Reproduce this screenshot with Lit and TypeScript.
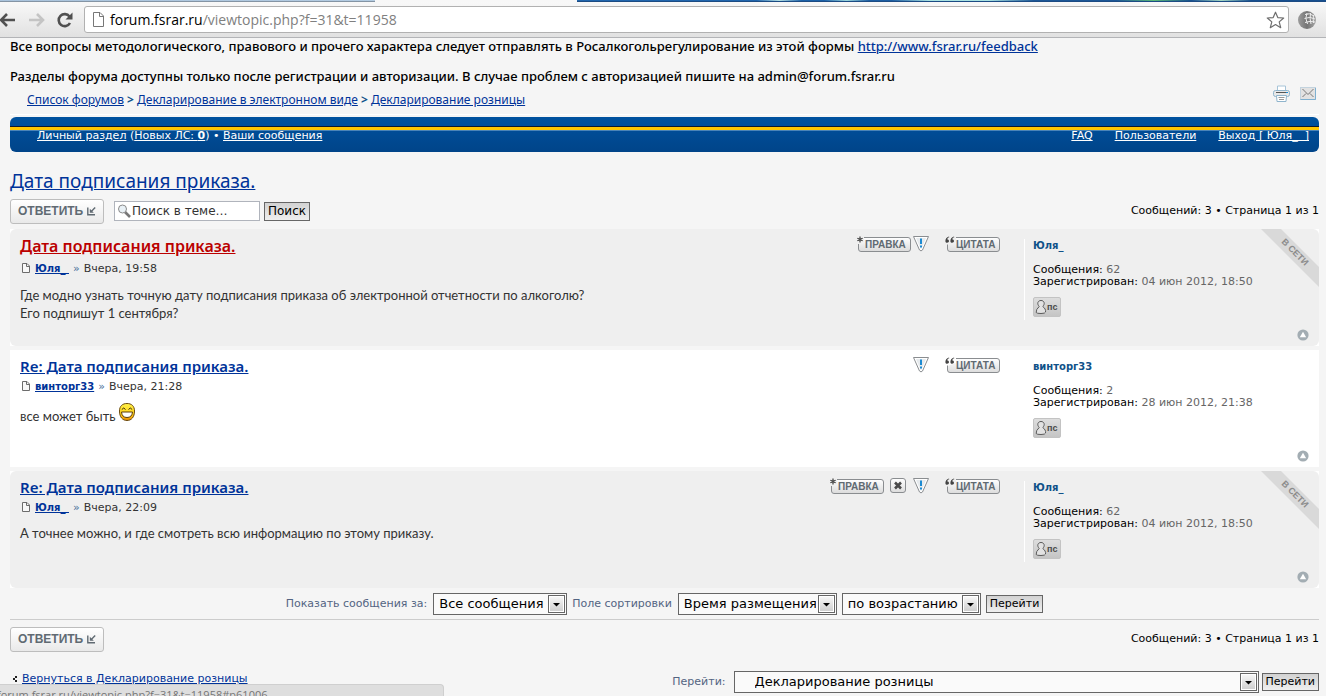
import { LitElement, html, css, svg, nothing } from "lit";
import { customElement, property } from "lit/decorators.js";

type Post = {
  title: string;
  first: boolean;
  author: string;
  time: string;
  lines: string[];
  smile: boolean;
  edit: boolean;
  remove: boolean;
  online: boolean;
  count: string;
  joined: string;
};

const posts: Post[] = [
  {
    title: "Дата подписания приказа.",
    first: true,
    author: "Юля_",
    time: "Вчера, 19:58",
    lines: [
      "Где модно узнать точную дату подписания приказа об электронной отчетности по алкоголю?",
      "Его подпишут 1 сентября?",
    ],
    smile: false,
    edit: true,
    remove: false,
    online: true,
    count: "62",
    joined: "04 июн 2012, 18:50",
  },
  {
    title: "Re: Дата подписания приказа.",
    first: false,
    author: "винторг33",
    time: "Вчера, 21:28",
    lines: ["все может быть"],
    smile: true,
    edit: false,
    remove: false,
    online: false,
    count: "2",
    joined: "28 июн 2012, 21:38",
  },
  {
    title: "Re: Дата подписания приказа.",
    first: false,
    author: "Юля_",
    time: "Вчера, 22:09",
    lines: ["А точнее можно, и где смотреть всю информацию по этому приказу."],
    smile: false,
    edit: true,
    remove: true,
    online: true,
    count: "62",
    joined: "04 июн 2012, 18:50",
  },
];

const shared = css`
  * {
    box-sizing: border-box;
  }
  a {
    color: #003399;
    text-decoration: underline;
  }
  button {
    font: inherit;
    color: inherit;
    margin: 0;
    padding: 0;
    border: 0;
    background: none;
    cursor: pointer;
  }
  svg {
    display: block;
    flex: none;
  }
  h2,
  h3,
  p,
  dl,
  dd {
    margin: 0;
  }
`;

const chipFill = svg`
  <defs>
    <linearGradient id="chip" x1="0" y1="0" x2="0" y2="1">
      <stop offset="0" stop-color="#ffffff" />
      <stop offset="1" stop-color="#dcdcdc" />
    </linearGradient>
  </defs>`;

const editIcon = html`<svg width="56" height="17" viewBox="0 0 56 17">
  ${chipFill}
  <path d="M7 1.500H51Q53.500 1.500 53.500 4V12.500Q53.500 15 51 15H4Q1.500 15 1.500 12.500V8L7 6Z" fill="url(#chip)" />
  <path d="M7 1.500H51Q53.500 1.500 53.500 4V13Q53.500 15.500 51 15.500H4Q1.500 15.500 1.500 13V8" fill="none" stroke="#8a8d90" />
  <path d="M3 0.500V6.500M0.400 2.200L5.600 4.800M5.600 2.200L0.400 4.800" stroke="#3c3c3c" stroke-width="1.200" />
  <text x="8" y="12" font-family="Liberation Sans, sans-serif" font-weight="bold" font-size="10" fill="#606a72">ПРАВКА</text>
</svg>`;

const quoteIcon = html`<svg width="56" height="17" viewBox="0 0 56 17">
  ${chipFill}
  <path d="M11 1.500H52Q54.500 1.500 54.500 4V13Q54.500 15.500 52 15.500H5Q2.500 15.500 2.500 13V9L11 6Z" fill="url(#chip)" />
  <path d="M11 1.500H52Q54.500 1.500 54.500 4V13Q54.500 15.500 52 15.500H5Q2.500 15.500 2.500 13V8.500" fill="none" stroke="#8a8d90" />
  <path d="M4 0.500C1.500 1.200 0.300 3 0.400 5.200C0.600 7.400 4 7.200 4 5.100C4 3.900 3.200 3.300 2.300 3.400C2.400 2.400 3 1.600 4.300 1.200Z" fill="#444" />
  <path d="M9 0.500C6.500 1.200 5.300 3 5.400 5.200C5.600 7.400 9 7.200 9 5.100C9 3.900 8.200 3.300 7.300 3.400C7.400 2.400 8 1.600 9.300 1.200Z" fill="#444" />
  <text x="11" y="12" font-family="Liberation Sans, sans-serif" font-weight="bold" font-size="10" fill="#606a72">ЦИТАТА</text>
</svg>`;

const removeIcon = html`<svg width="16" height="16" viewBox="0 0 16 16">
  ${chipFill}
  <rect x="0.500" y="0.500" width="15" height="14" rx="2.500" fill="url(#chip)" stroke="#8a8d90" />
  <path d="M5 4.500L11 10.500M11 4.500L5 10.500" stroke="#4a4a4a" stroke-width="2.600" />
</svg>`;

const reportIcon = html`<svg width="16" height="16" viewBox="0 0 16 16">
  <path d="M0.500 0.500H15.500L9.500 14Q8 15.800 6.500 14Z" fill="#fff" stroke="#8a8d90" />
  <path d="M3 2H13L8.700 12.300Q8 13.300 7.300 12.300Z" fill="#e6eaed" />
  <path d="M7 2.500H9V8H7ZM7 9.500H9V11.500H7Z" fill="#1c8ad1" />
</svg>`;

const pmIcon = html`<svg width="28" height="20" viewBox="0 0 28 20">
  <defs>
    <linearGradient id="pm" x1="0" y1="0" x2="0" y2="1">
      <stop offset="0" stop-color="#dedede" />
      <stop offset="1" stop-color="#c4c4c4" />
    </linearGradient>
  </defs>
  <rect x="0.500" y="0.500" width="27" height="19" rx="1.500" fill="url(#pm)" stroke="#c3c3c3" />
  <path
    d="M6.200 9.500C3.500 6.500 5 3.500 8 3.500S12.500 6.500 9.800 9.500C11.800 11 13 13 12.500 15Q12.400 16.500 8 16.500T3.200 15.500Q2.800 12.500 6.200 9.500Z"
    fill="#e2e2e2"
    stroke="#5a5a5a"
  />
  <text x="14" y="13" font-family="Liberation Sans, sans-serif" font-weight="bold" font-size="9" fill="#4a4a4a">пс</text>
</svg>`;

const topIcon = html`<svg width="12" height="12" viewBox="0 0 12 12">
  <circle cx="6" cy="6" r="5.600" fill="#a3adb3" />
  <path d="M6 2.800L9.200 8.200H2.800Z" fill="#fff" />
</svg>`;

const pageIcon = html`<svg width="8" height="10" viewBox="0 0 8 10">
  <path d="M0.500 0.500H5L7.500 3V9.500H0.500Z" fill="#f8f8f8" stroke="#6c6c6c" />
  <path d="M4.500 0.500V3.500H7.500" fill="none" stroke="#6c6c6c" />
</svg>`;

const smileIcon = html`<svg width="16" height="18" viewBox="0 0 16 18" role="img" aria-label=":D">
  <defs>
    <linearGradient id="sm" x1="0" y1="0" x2="0" y2="1">
      <stop offset="0" stop-color="#fff24a" />
      <stop offset="0.600" stop-color="#ffd21a" />
      <stop offset="1" stop-color="#e88a00" />
    </linearGradient>
  </defs>
  <path d="M8 0.500C12.500 0.500 15.500 3 15.500 8C15.500 14 12.500 17.500 8 17.500S0.500 14 0.500 8C0.500 3 3.500 0.500 8 0.500Z" fill="url(#sm)" stroke="#6b4a10" />
  <path d="M2.800 6.500Q4.800 3.500 6.500 6.500M9.500 6.500Q11.200 3.500 13.200 6.500" fill="none" stroke="#3a2a08" />
  <path d="M2.500 9H13.500Q13 14.500 8 14.500T2.500 9Z" fill="#fff" stroke="#5c3c08" />
</svg>`;

const ribbon = html`<svg width="58" height="58" viewBox="0 0 58 58">
  <path d="M0 0H20L58 38V58Z" fill="#d9d9d9" />
  <text
    x="34"
    y="26"
    transform="rotate(45 34 23)"
    text-anchor="middle"
    font-family="Liberation Sans, sans-serif"
    font-weight="bold"
    font-size="9"
    fill="#8c8c8c"
  >В СЕТИ</text>
</svg>`;

@customElement("forum-post")
class ForumPost extends LitElement {
  @property({ attribute: false }) post!: Post;

  static styles = [
    shared,
    css`
      :host {
        display: block;
        background: #fff;
      }
      .post {
        position: relative;
        display: grid;
        grid-template-columns: 1fr 295px;
        min-height: 117px;
        overflow: hidden;
      }
      .online {
        background: #efefef;
        border-radius: 6px;
      }
      .main {
        display: grid;
        grid-template-columns: 1fr auto;
        align-content: start;
        padding: 5px 23px 0 10px;
      }
      .title {
        font: 600 15px/22px "Noto Sans", sans-serif;
      }
      .title.first {
        font-size: 16px;
        line-height: 24px;
      }
      .title.first a {
        color: #bb0000;
      }
      .actions {
        display: flex;
        align-items: flex-start;
        padding-top: 2px;
      }
      .gap {
        margin-right: 16px;
      }
      .space {
        margin-right: 7px;
      }
      .edit-gap {
        margin-right: 4px;
      }
      .author {
        grid-column: 1 / -1;
        display: flex;
        align-items: center;
        gap: 4px;
        margin-top: 2px;
        padding-left: 2px;
        font: 11px/16px "DejaVu Sans", sans-serif;
        color: #333;
        white-space: pre;
      }
      .first ~ .author {
        line-height: 18px;
      }
      .author svg {
        margin: 0 1px 2px 0;
      }
      .author a {
        font-size: 10px;
        font-weight: bold;
      }
      .mark {
        color: #4a6f9a;
      }
      .body {
        grid-column: 1 / -1;
        padding-top: 8px;
        font: 13px/18px Lato, sans-serif;
        color: #333;
      }
      .line {
        display: flex;
        gap: 4px;
      }
      .smiling .line {
        align-items: flex-end;
      }
      .smiling svg {
        margin-bottom: 4px;
      }
      .profile {
        margin: 10px 0 16px;
        height: 81px;
        padding: 1px 0 0 8px;
        border-left: 1px solid #fff;
        font: 11px/12px "DejaVu Sans", sans-serif;
        color: #666;
      }
      .name {
        margin-bottom: 12px;
        font-size: 10px;
        font-weight: bold;
      }
      .name a {
        color: #105289;
        text-decoration: none;
      }
      dl strong {
        color: #000;
        font-weight: normal;
      }
      .pm {
        margin-top: 9px;
      }
      .badge {
        position: absolute;
        top: 0;
        right: 0;
      }
      .top {
        position: absolute;
        right: 10px;
        bottom: 5px;
      }
    `,
  ];

  render() {
    const p = this.post;
    return html`<article class="post ${p.online ? "online" : ""}">
      <div class="main">
        <h3 class="title ${p.first ? "first" : ""}"><a href="#">${p.title}</a></h3>
        <div class="actions">
          ${p.edit
            ? html`<button class=${p.remove ? "edit-gap" : ""} aria-label="Правка">${editIcon}</button>`
            : nothing}
          ${p.remove ? html`<button class="space" aria-label="Удалить">${removeIcon}</button>` : nothing}
          <button class="gap" aria-label="Пожаловаться">${reportIcon}</button>
          <button aria-label="Цитата">${quoteIcon}</button>
        </div>
        <p class="author">
          ${pageIcon}<a href="#">${p.author + (p.author.endsWith("_") ? " " : "")}</a><span class="mark">»</span><span>${p.time}</span>
        </p>
        <div class="body ${p.smile ? "smiling" : ""}">
          ${p.lines.map((l) => html`<p class="line"><span>${l}</span>${p.smile ? smileIcon : nothing}</p>`)}
        </div>
      </div>
      <dl class="profile">
        <dd class="name"><a href="#">${p.author}</a></dd>
        <dd><strong>Сообщения:</strong> ${p.count}</dd>
        <dd><strong>Зарегистрирован:</strong> ${p.joined}</dd>
        <dd class="pm"><button aria-label="ЛС">${pmIcon}</button></dd>
      </dl>
      ${p.online ? html`<div class="badge">${ribbon}</div>` : nothing}
      <a class="top" href="#" aria-label="Вернуться к началу">${topIcon}</a>
    </article>`;
  }
}

@customElement("app-root")
class AppRoot extends LitElement {
  static styles = [
    shared,
    css`
      :host {
        display: block;
        position: relative;
        height: 100vh;
        overflow: hidden;
        background: #f5f5f5;
        color: #000;
        font: 11px/16px "DejaVu Sans", sans-serif;
      }
      .tabs {
        display: flex;
        height: 2px;
        background: linear-gradient(90deg, #a9c3dc, #b7cfe4 40%, #8fb3cf);
      }
      .tab-left {
        width: 375px;
        border-bottom: 1px solid #8494a4;
      }
      .tab-active {
        width: 202px;
        background: #f7f7f7;
      }
      .tab-rest {
        flex: 1;
        background: linear-gradient(90deg, #2166ad 24%, #b5e0e4 27%, #1d62a8 30%, #1d62a8 33%, #9bd6dc 36%, #1d5ea2 39%, #1d5ea2 42%, #a9e2e2 47%, #a9e2e2 55%, #1d5796 61%, #1d5796 72%, #5bb978 77%, #174f8f 82%, #a4d7c4 86%, #174f8f 90%);
        border-bottom: 1px solid #1c4b83;
      }
      .toolbar {
        display: flex;
        align-items: center;
        height: 36px;
        padding: 0 10px 0 0;
        border-bottom: 1px solid #b3b4b7;
        background: linear-gradient(#f8f8f8, #e1e1e1);
      }
      .toolbar .reload {
        margin: 0 10px 0 12px;
      }
      .toolbar .forward {
        margin-left: 14px;
      }
      .address {
        flex: 1;
        display: flex;
        align-items: center;
        height: 27px;
        margin-right: 9px;
        padding: 0 3px 0 8px;
        border: 1px solid #b1b1b1;
        border-radius: 3px;
        background: #fff;
        font: 14px/20px "Open Sans", sans-serif;
        color: #808080;
      }
      .address .url {
        flex: 1;
        padding-left: 6px;
      }
      .address b {
        font-weight: normal;
        color: #000;
      }
      .page {
        padding: 0 7px 0 10px;
      }
      .notice {
        font: 500 13px/16px "Noto Sans", sans-serif;
        margin-bottom: 14px;
      }
      .crumbs {
        display: flex;
        align-items: flex-start;
        justify-content: space-between;
        height: 31px;
        margin-top: -14px;
        padding: 0 3px 0 17px;
        border-bottom: 1px solid #fff;
        font: 12px/16px "Noto Sans", sans-serif;
      }
      .trail {
        padding-top: 8px;
      }
      .trail b {
        color: #105289;
      }
      .tools {
        display: flex;
        gap: 10px;
        padding-top: 1px;
      }
      .nav {
        margin-top: 2px;
        height: 35px;
        padding: 9px 10px 0 0;
        border-radius: 6px;
        background: linear-gradient(#00529f, #004489);
      }
      .stripe {
        height: 5px;
        margin-right: -10px;
        border-top: 1px solid #10182c;
        border-bottom: 1px solid #4a84b8;
        background: #ffc600;
      }
      .links {
        display: flex;
        justify-content: space-between;
        padding-left: 27px;
        line-height: 16px;
        margin-top: -3px;
        color: #fff;
      }
      .links a {
        color: #fff;
      }
      .user {
        display: flex;
        gap: 22px;
        white-space: pre;
      }
      .topic {
        margin: 15px 0 3px;
        font: 19px/28px "Noto Sans", sans-serif;
      }
      .bar {
        display: flex;
        align-items: center;
        height: 26px;
      }
      .bar .pages {
        margin-left: auto;
      }
      .reply {
        display: flex;
        align-items: center;
        gap: 4px;
        width: 94px;
        height: 25px;
        padding-left: 7px;
        border: 1px solid #bdbdbd;
        border-radius: 3px;
        background: linear-gradient(#ffffff, #e9e9e9);
        font: bold 12px/16px "Liberation Sans", sans-serif;
        color: #606a72;
      }
      .search {
        display: flex;
        align-items: center;
        gap: 4px;
        padding-left: 10px;
      }
      .field {
        display: flex;
        align-items: center;
        width: 146px;
        height: 20px;
        padding-left: 2px;
        border: 1px solid #b0b4bc;
        background: #fff;
      }
      .field input {
        flex: 1;
        min-width: 0;
        padding: 0 0 0 1px;
        border: 0;
        outline: 0;
        background: none;
        color: #333;
        font: 12px/16px "DejaVu Sans", sans-serif;
      }
      .go {
        height: 18px;
        padding: 0 3px;
        border: 1px solid #666;
        background: linear-gradient(#d2d2d2, #efefef);
        color: #000;
        line-height: 14px;
      }
      .go.big {
        font-size: 12px;
        height: 19px;
      }
      .posts {
        display: grid;
        gap: 4px;
        margin-top: 5px;
      }
      .sort {
        display: flex;
        justify-content: center;
        align-items: center;
        gap: 5px;
        height: 32px;
        border-bottom: 1px solid #ccc;
        color: #536482;
        margin-bottom: 6px;
      }
      .sort label,
      .jump label {
        display: flex;
        align-items: center;
        gap: 6px;
      }
      .pick {
        display: grid;
        align-items: center;
        justify-items: end;
      }
      .pick select,
      .pick svg {
        grid-area: 1 / 1;
      }
      .pick svg {
        pointer-events: none;
        margin-right: 2px;
      }
      select {
        appearance: none;
        height: 22px;
        padding: 0 20px 0 5px;
        border: 1px solid #666;
        border-radius: 0;
        background: #fafafa;
        color: #000;
        font: 13px/18px "DejaVu Sans", sans-serif;
      }
      .w-all {
        width: 134px;
      }
      .w-time {
        width: 159px;
      }
      .w-dir {
        width: 139px;
      }
      .w-jump {
        width: 525px;
        padding-left: 20px;
      }
      .foot {
        display: flex;
        justify-content: space-between;
        align-items: flex-start;
        margin-top: 19px;
      }
      .back {
        display: flex;
        align-items: center;
        gap: 5px;
        padding-left: 3px;
      }
      .jump {
        display: flex;
        align-items: center;
        gap: 3px;
        color: #536482;
      }
      .jump label {
        gap: 8px;
      }
      .status {
        position: absolute;
        left: -6px;
        bottom: 0;
        width: 450px;
        height: 12px;
        overflow: hidden;
        padding-left: 2px;
        border: 1px solid #cfcfcf;
        border-bottom: 0;
        border-radius: 0 4px 0 0;
        background: #dedede;
        color: #757575;
        font: 11px/20px "Open Sans", sans-serif;
      }
    `,
  ];

  arrow() {
    return html`<svg width="17" height="18" viewBox="0 0 17 18">
      <defs>
        <linearGradient id="arr" x1="0" y1="0" x2="0" y2="1">
          <stop offset="0" stop-color="#f6f6f6" />
          <stop offset="1" stop-color="#cfcfcf" />
        </linearGradient>
      </defs>
      <rect x="0.500" y="0.500" width="16" height="17" fill="#fff" stroke="#666" />
      <rect x="2" y="2" width="13" height="14" fill="url(#arr)" />
      <path d="M5 8H12L8.500 11.500Z" fill="#000" />
    </svg>`;
  }

  pick(id: string, width: string, text: string) {
    return html`<span class="pick"
      ><select id=${id} class=${width} aria-label=${text}><option>${text}</option></select>${this.arrow()}</span
    >`;
  }

  reply() {
    return html`<button class="reply">
      ОТВЕТИТЬ
      <svg width="9" height="10" viewBox="0 0 9 10">
        <path d="M0.800 1.500V8.800H8" fill="none" stroke="#606a72" stroke-width="1.400" />
        <path d="M8.200 1.500L4 5.700" fill="none" stroke="#606a72" stroke-width="1.400" />
        <path d="M2.800 2.800V6.800H6.800Z" fill="#606a72" />
      </svg>
    </button>`;
  }

  render() {
    return html`
      <div class="tabs">
        <div class="tab-left"></div>
        <div class="tab-active"></div>
        <div class="tab-rest"></div>
      </div>
      <div class="toolbar">
        <button aria-label="Назад">
          <svg width="15" height="16" viewBox="0 0 15 16">
            <path d="M15 8H1.500M7 2L1 8L7 14" fill="none" stroke="#505050" stroke-width="2.600" />
          </svg>
        </button>
        <button class="forward" aria-label="Вперед">
          <svg width="16" height="16" viewBox="0 0 16 16">
            <path d="M0 8H13.500M8 2L14 8L8 14" fill="none" stroke="#c4c4c4" stroke-width="2.600" />
          </svg>
        </button>
        <button class="reload" aria-label="Обновить">
          <svg width="17" height="16" viewBox="0 0 17 16">
            <path d="M13 11A6 6 0 1 1 12.500 4.500" fill="none" stroke="#505050" stroke-width="2.600" />
            <path d="M15.500 0.500V7.500H8.500Z" fill="#505050" />
          </svg>
        </button>
        <div class="address">
          <svg width="11" height="15" viewBox="0 0 11 15">
            <path d="M0.500 0.500H7L10.500 4V14.500H0.500Z" fill="#fff" stroke="#777" />
            <path d="M6.500 0.500V4.500H10.500" fill="none" stroke="#777" />
          </svg>
          <span class="url"><b>forum.fsrar.ru</b>/viewtopic.php?f=31&amp;t=11958</span>
          <svg width="19" height="18" viewBox="0 0 19 18">
            <path
              d="M9.500 1.200L11.800 6.600L17.700 7L13.200 10.900L14.700 16.700L9.500 13.600L4.300 16.700L5.800 10.900L1.300 7L7.200 6.600Z"
              fill="#fff"
              stroke="#6e6e6e"
              stroke-width="1.200"
              stroke-linejoin="round"
            />
          </svg>
        </div>
        <svg width="18" height="18" viewBox="0 0 18 18">
          <defs>
            <linearGradient id="ball" x1="0" y1="0" x2="1" y2="0">
              <stop offset="0" stop-color="#9c9c9c" />
              <stop offset="0.500" stop-color="#747474" />
              <stop offset="1" stop-color="#a8a8a8" />
            </linearGradient>
          </defs>
          <circle cx="9" cy="9" r="9" fill="url(#ball)" />
          <path d="M7 3.500Q12 1.500 15 4.500M6.500 7.500Q12 5 17 8M7 11.500Q12 9.500 17 11M9 2Q6.500 7 9.500 13M12.500 2Q11.500 8 13 13M15.500 4Q15 9 15.500 12" fill="none" stroke="#ededed" />
        </svg>
      </div>

      <div class="page">
        <p class="notice">
          Все вопросы методологического, правового и прочего характера следует отправлять в
          Росалкогольрегулирование из этой формы <a href="#">http://www.fsrar.ru/feedback</a>
        </p>
        <p class="notice">
          Разделы форума доступны только после регистрации и авторизации. В случае проблем с авторизацией
          пишите на admin@forum.fsrar.ru
        </p>
        <div class="crumbs">
          <div class="trail">
            <a href="#">Список форумов</a> <b>&gt;</b> <a href="#">Декларирование в электронном виде</a> <b>&gt;</b>
            <a href="#">Декларирование розницы</a>
          </div>
          <div class="tools">
            <svg width="17" height="17" viewBox="0 0 17 17">
              <path d="M4.500 6V1H12.500V6" fill="#fff" stroke="#a7c4d8" />
              <rect x="0.500" y="5.500" width="16" height="6" rx="2" fill="#e8e8e8" stroke="#8fb4cc" />
              <path d="M3 7.500H13M4 10.500H13" stroke="#555" />
              <path d="M3.500 10.500H13.500L13 16.500H4Z" fill="#fff" stroke="#8fb4cc" />
              <path d="M5.500 12.500H11.500M6 14.500H11" stroke="#999" />
              <rect x="13" y="7" width="2" height="1" fill="#1c8ad1" />
            </svg>
            <svg width="16" height="16" viewBox="0 0 16 16">
              <rect x="0.500" y="2.500" width="15" height="12" fill="#e2e2e2" stroke="#c3d3de" />
              <path d="M0.500 14.500H15.500V3" fill="none" stroke="#7fb0d0" />
              <path d="M2.500 4L8 9.500L13.500 4M2.500 12L6 8.500M13.500 12L10 8.500" fill="none" stroke="#6a6a6a" stroke-width="0.900" />
            </svg>
          </div>
        </div>

        <nav class="nav">
          <div class="stripe"></div>
          <div class="links">
            <span
              ><a href="#">Личный раздел</a> (<a href="#">Новых ЛС: <b>0</b></a>) • <a href="#">Ваши сообщения</a></span
            >
            <span class="user"><a href="#">FAQ</a><a href="#">Пользователи</a><a href="#">Выход [ Юля_  ]</a></span>
          </div>
        </nav>

        <h2 class="topic"><a href="#">Дата подписания приказа.</a></h2>
        <div class="bar">
          ${this.reply()}
          <form class="search">
            <label class="field">
              <svg width="14" height="14" viewBox="0 0 14 14">
                <path d="M8 8L13 13" stroke="#777" stroke-width="2.600" />
                <circle cx="5.500" cy="5" r="4" fill="#e9f1f6" stroke="#8a8a8a" />
              </svg>
              <input type="text" aria-label="Поиск в теме" value="Поиск в теме…" />
            </label>
            <button type="button" class="go big">Поиск</button>
          </form>
          <span class="pages">Сообщений: 3 • Страница 1 из 1</span>
        </div>

        <div class="posts">${posts.map((p) => html`<forum-post .post=${p}></forum-post>`)}</div>

        <form class="sort">
          <label for="st">Показать сообщения за: ${this.pick("st", "w-all", "Все сообщения")}</label>
          <label for="sk">Поле сортировки ${this.pick("sk", "w-time", "Время размещения")}</label>
          ${this.pick("sd", "w-dir", "по возрастанию")}
          <button type="button" class="go">Перейти</button>
        </form>

        <div class="bar">
          ${this.reply()}
          <span class="pages">Сообщений: 3 • Страница 1 из 1</span>
        </div>

        <div class="foot">
          <div class="back">
            <svg width="4" height="6" viewBox="0 0 4 6">
              <path d="M2 0H4V2H2ZM0 2H2V4H0ZM2 4H4V6H2Z" fill="#222" />
            </svg>
            <a href="#">Вернуться в Декларирование розницы</a>
          </div>
          <form class="jump">
            <label for="jump">Перейти: ${this.pick("jump", "w-jump", "Декларирование розницы")}</label>
            <button type="button" class="go">Перейти</button>
          </form>
        </div>
      </div>
      <div class="status">forum.fsrar.ru/viewtopic.php?f=31&amp;t=11958#p61006</div>
    `;
  }
}
